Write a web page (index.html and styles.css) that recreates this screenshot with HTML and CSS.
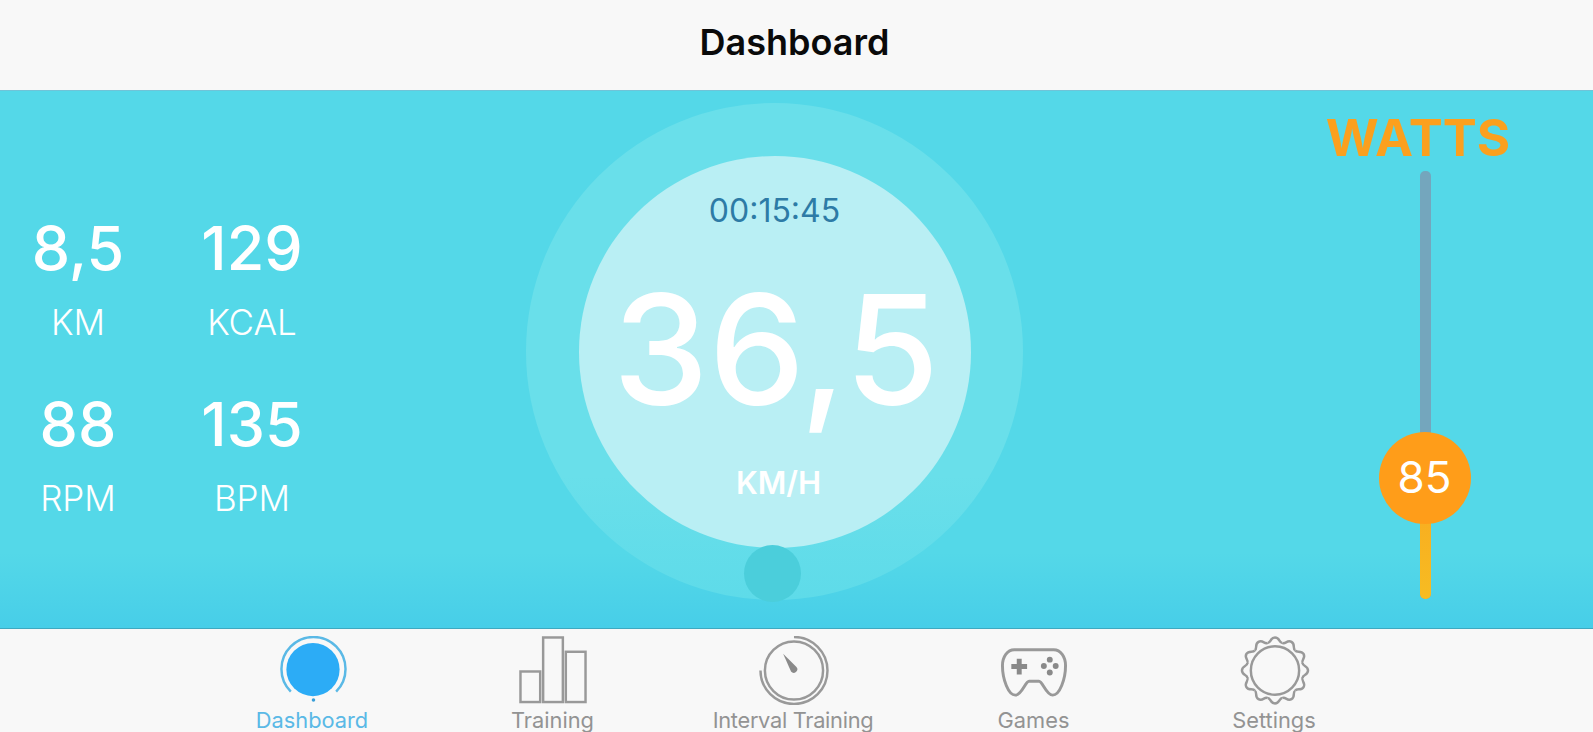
FILE: index.html
```html
<!DOCTYPE html>
<html lang="en">
<head>
    <meta charset="UTF-8">
    <meta name="viewport" content="width=device-width, initial-scale=1.0">
    <title>Dashboard</title>
    <link rel="stylesheet" href="styles.css">
</head>
<body>
    <div class="header">Dashboard</div>

    <div class="main">
        <div class="stats">
            <div class="stat">
                <div class="stat-value">8,5</div>
                <div class="stat-label">KM</div>
            </div>
            <div class="stat">
                <div class="stat-value">129</div>
                <div class="stat-label">KCAL</div>
            </div>
            <div class="stat">
                <div class="stat-value">88</div>
                <div class="stat-label">RPM</div>
            </div>
            <div class="stat">
                <div class="stat-value">135</div>
                <div class="stat-label">BPM</div>
            </div>
        </div>

        <div class="gauge">
            <div class="gauge-inner">
                <div class="gauge-time">00:15:45</div>
                <div class="gauge-speed">36,5</div>
                <div class="gauge-unit">KM/H</div>
            </div>
            <div class="gauge-knob"></div>
        </div>

        <div class="watts">
            <div class="watts-title">WATTS</div>
            <div class="watts-track">
                <div class="watts-fill"></div>
                <div class="watts-thumb">85</div>
            </div>
        </div>
    </div>

    <div class="tabs">
        <div class="tab active">
            <svg class="tab-icon" viewBox="0 0 72 70">
                <circle cx="37" cy="34" r="27" fill="#2cacf6"/>
                <path d="M14.500 56.500A32.500 32.500 0 1 1 60.500 56.500" fill="none" stroke="#5ab9e6" stroke-width="2.500"/>
                <circle cx="37.500" cy="65" r="1.800" fill="#3a9fd8"/>
            </svg>
            <div class="tab-label">Dashboard</div>
        </div>
        <div class="tab">
            <svg class="tab-icon" viewBox="0 0 72 70">
                <g fill="none" stroke="#999" stroke-width="2.500">
                    <rect x="3" y="36" width="20" height="31"/>
                    <rect x="26" y="1.500" width="20" height="65.500"/>
                    <rect x="49" y="16" width="20" height="51"/>
                </g>
            </svg>
            <div class="tab-label">Training</div>
        </div>
        <div class="tab">
            <svg class="tab-icon" viewBox="-1 0 72 70">
                <circle cx="36" cy="35" r="29.500" fill="none" stroke="#999" stroke-width="2.500"/>
                <path d="M36 1A34 34 0 1 1 2 35" fill="none" stroke="#999" stroke-width="2.500"/>
                <path d="M25 18L38.500 31.500A3.500 3.500 0 0 1 33 36Z" fill="#8a8a8a"/>
            </svg>
            <div class="tab-label tab-label-tight">Interval Training</div>
        </div>
        <div class="tab">
            <svg class="tab-icon" viewBox="0 0 72 70">
                <path d="M16 14H56C63 14 68 21 68 30C68 44 62 60 55 60C48 60 45 46 41 46H31C27 46 24 60 17 60C10 60 4 44 4 30C4 21 9 14 16 14Z" fill="none" stroke="#999" stroke-width="3" stroke-linejoin="round"/>
                <path d="M18.500 23h5v5.500h5.500v5h-5.500v5.500h-5v-5.500h-5.500v-5h5.500z" fill="#8a8a8a"/>
                <g fill="#8a8a8a">
                    <circle cx="52" cy="24" r="3"/>
                    <circle cx="52" cy="37" r="3"/>
                    <circle cx="46" cy="30.500" r="3"/>
                    <circle cx="58" cy="30.500" r="3"/>
                </g>
            </svg>
            <div class="tab-label">Games</div>
        </div>
        <div class="tab">
            <svg class="tab-icon" viewBox="-37 -35 72 70">
                <circle r="24.500" fill="none" stroke="#999" stroke-width="2.500"/>
                <g fill="none" stroke="#999" stroke-width="2.500">
                    <path id="bump" d="M-7.500-28C-4-28-5-33.500 0-33.500C5-33.500 4-28 7.500-28"/>
                    <use href="#bump" transform="rotate(30)"/>
                    <use href="#bump" transform="rotate(60)"/>
                    <use href="#bump" transform="rotate(90)"/>
                    <use href="#bump" transform="rotate(120)"/>
                    <use href="#bump" transform="rotate(150)"/>
                    <use href="#bump" transform="rotate(180)"/>
                    <use href="#bump" transform="rotate(210)"/>
                    <use href="#bump" transform="rotate(240)"/>
                    <use href="#bump" transform="rotate(270)"/>
                    <use href="#bump" transform="rotate(300)"/>
                    <use href="#bump" transform="rotate(330)"/>
                </g>
            </svg>
            <div class="tab-label">Settings</div>
        </div>
    </div>
</body>
</html>
```

FILE: styles.css
```css
body {
    font-family: Inter, "Liberation Sans", sans-serif;
    margin: 0;
    padding: 0;
    height: 732px;
    overflow: hidden;
    display: flex;
    flex-direction: column;
    background-color: #f8f8f8;
}
.header {
    height: 90px;
    flex: none;
    display: flex;
    align-items: center;
    justify-content: center;
    padding-bottom: 6px;
    padding-right: 4px;
    box-sizing: border-box;
    font-size: 36px;
    font-weight: 600;
    color: #0a0a0a;
    background-color: #f8f8f8;
}
.main {
    height: 539px;
    flex: none;
    display: flex;
    box-sizing: border-box;
    border-top: 1px solid #6fc4d8;
    border-bottom: 1px solid #3fa9c0;
    background: linear-gradient(#54d8e8 0, #54d8e8 86%, #47cee8 100%);
    color: #fff;
}
.stats {
    width: 330px;
    flex: none;
    display: grid;
    grid-template-columns: 156px 156px;
    column-gap: 18px;
    align-content: start;
    padding-top: 126px;
    row-gap: 51px;
}
.stat {
    text-align: center;
}
.stat-value {
    font-size: 61px;
    font-weight: 450;
    line-height: 62px;
}
.stat-label {
    font-size: 35px;
    font-weight: 300;
    line-height: 40px;
    margin-top: 23px;
}
.gauge {
    position: relative;
    width: 497px;
    height: 497px;
    flex: none;
    margin-left: 196px;
    margin-top: 12px;
    border-radius: 50%;
    background: linear-gradient(#69dfea 0, #69dfea 75%, #5edbe9 100%);
    display: flex;
    align-items: center;
    justify-content: center;
}
.gauge-inner {
    width: 392px;
    height: 392px;
    border-radius: 50%;
    background-color: #b9eff4;
    display: flex;
    flex-direction: column;
    align-items: center;
    box-sizing: border-box;
    padding-top: 35px;
}
.gauge-time {
    font-size: 32px;
    line-height: 40px;
    color: #2d7ba6;
}
.gauge-speed {
    font-size: 153px;
    font-weight: 450;
    line-height: 160px;
    margin-top: 39px;
    margin-left: 3px;
}
.gauge-unit {
    font-size: 31px;
    font-weight: 600;
    line-height: 36px;
    margin-top: 35px;
    margin-left: 8px;
}
.gauge-knob {
    position: absolute;
    left: 218px;
    top: 442px;
    width: 57px;
    height: 57px;
    border-radius: 50%;
    background-color: #4bcedb;
}
.watts {
    flex: none;
    width: 190px;
    margin-left: 307px;
    display: flex;
    flex-direction: column;
    align-items: center;
}
.watts-title {
    font-size: 51px;
    font-weight: 700;
    line-height: 60px;
    margin-top: 17px;
    margin-left: -14px;
    color: #fba01e;
}
.watts-track {
    position: relative;
    width: 11px;
    height: 428px;
    margin-top: 3px;
    border-radius: 5px;
    background-color: #74a6bd;
}
.watts-fill {
    position: absolute;
    left: 0;
    right: 0;
    bottom: 0;
    height: 122px;
    border-radius: 0 0 5px 5px;
    background: linear-gradient(#f9a81f, #f7bc22);
}
.watts-thumb {
    position: absolute;
    left: -41px;
    top: 261px;
    width: 92px;
    height: 92px;
    border-radius: 50%;
    background-color: #ff9d19;
    display: flex;
    align-items: center;
    justify-content: center;
    padding-bottom: 3px;
    box-sizing: border-box;
    font-size: 44px;
    color: #fff;
}
.tabs {
    flex: 1;
    display: flex;
    justify-content: center;
    padding-right: 7px;
    background-color: #f8f8f8;
    overflow: hidden;
}
.tab {
    width: 240.500px;
    display: flex;
    flex-direction: column;
    align-items: center;
    padding-top: 7px;
}
.tab-icon {
    width: 72px;
    height: 70px;
    display: block;
}
.tab-label {
    font-size: 21.800px;
    line-height: 24px;
    margin-top: 3px;
    color: #939393;
    white-space: nowrap;
}
.tab-label-tight {
    letter-spacing: -0.300px;
}
.tab.active .tab-label {
    color: #5ab9e6;
}
```
